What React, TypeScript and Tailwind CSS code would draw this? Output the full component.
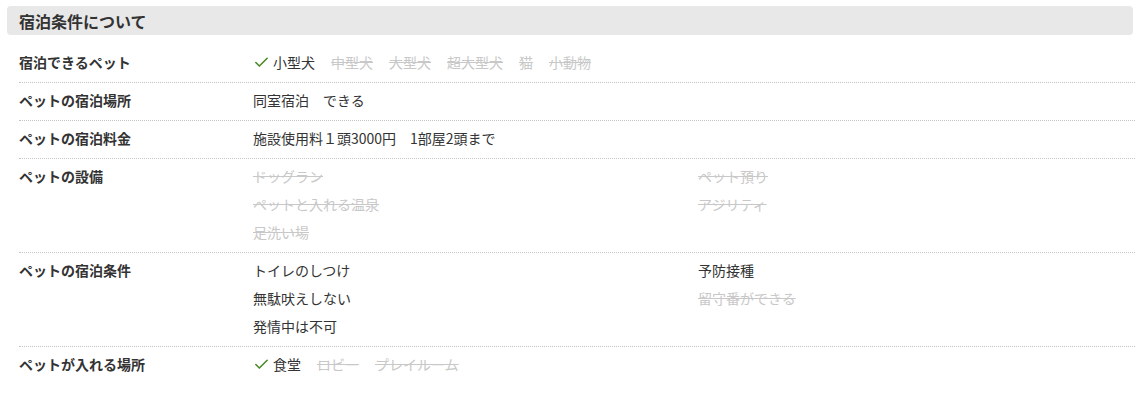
import { Check } from 'lucide-react';

type Item = { label: string; on: boolean; plain?: boolean };

const font = { fontFamily: '"Noto Sans CJK JP", "Noto Sans", sans-serif' };

function Mark({ item }: { item: Item }) {
  if (item.plain) {
    return <span className="text-[#333]">{item.label}</span>;
  }
  if (item.on) {
    return (
      <span className="flex items-center gap-[3px] text-[#333]">
        <Check className="w-[17px] h-[17px] text-[#4d8a2a]" strokeWidth={2.3} />
        {item.label}
      </span>
    );
  }
  return <span className="text-[#c8c8c8] line-through">{item.label}</span>;
}

function Row({ label, children }: { label: string; children: React.ReactNode }) {
  return (
    <div className="flex border-b border-dotted border-[#c4c4c4] pt-[3px] pb-[6px]">
      <div className="w-[234px] shrink-0 font-bold text-[#333] leading-[28px]">{label}</div>
      <div className="flex-1 leading-[28px]">{children}</div>
    </div>
  );
}

function TwoCol({ left, right }: { left: Item[]; right: Item[] }) {
  return (
    <div className="grid grid-cols-[445px_1fr]">
      <div className="flex flex-col">
        {left.map((i) => (
          <div key={i.label}>
            <Mark item={i} />
          </div>
        ))}
      </div>
      <div className="flex flex-col">
        {right.map((i) => (
          <div key={i.label}>
            <Mark item={i} />
          </div>
        ))}
      </div>
    </div>
  );
}

export default function App() {
  const pets: Item[] = [
    { label: '小型犬', on: true },
    { label: '中型犬', on: false },
    { label: '大型犬', on: false },
    { label: '超大型犬', on: false },
    { label: '猫', on: false },
    { label: '小動物', on: false },
  ];
  const places: Item[] = [
    { label: '食堂', on: true },
    { label: 'ロビー', on: false },
    { label: 'プレイルーム', on: false },
  ];

  return (
    <div className="bg-white w-[1145px] h-[394px] pt-[6px] pl-[7px] text-[14px] text-[#333]" style={font}>
      <div className="w-[1126px] h-[29px] bg-[#e8e8e8] rounded-[4px] flex items-center pl-[12px]">
        <h2 className="font-bold text-[16px] text-[#333]">宿泊条件について</h2>
      </div>
      <div className="ml-[12px] w-[1116px] mt-[10px]">
        <Row label="宿泊できるペット">
          <div className="flex items-center gap-[16px]">
            {pets.map((p) => (
              <Mark key={p.label} item={p} />
            ))}
          </div>
        </Row>
        <Row label="ペットの宿泊場所">同室宿泊　できる</Row>
        <Row label="ペットの宿泊料金">施設使用料１頭3000円　1部屋2頭まで</Row>
        <Row label="ペットの設備">
          <TwoCol
            left={[
              { label: 'ドッグラン', on: false },
              { label: 'ペットと入れる温泉', on: false },
              { label: '足洗い場', on: false },
            ]}
            right={[
              { label: 'ペット預り', on: false },
              { label: 'アジリティ', on: false },
            ]}
          />
        </Row>
        <Row label="ペットの宿泊条件">
          <TwoCol
            left={[
              { label: 'トイレのしつけ', on: true, plain: true },
              { label: '無駄吠えしない', on: true, plain: true },
              { label: '発情中は不可', on: true, plain: true },
            ]}
            right={[
              { label: '予防接種', on: true, plain: true },
              { label: '留守番ができる', on: false },
            ]}
          />
        </Row>
        <div className="flex pt-[3px] pb-[6px]">
          <div className="w-[234px] shrink-0 font-bold leading-[28px]">ペットが入れる場所</div>
          <div className="flex items-center gap-[16px] leading-[28px]">
            {places.map((p) => (
              <Mark key={p.label} item={p} />
            ))}
          </div>
        </div>
      </div>
    </div>
  );
}
